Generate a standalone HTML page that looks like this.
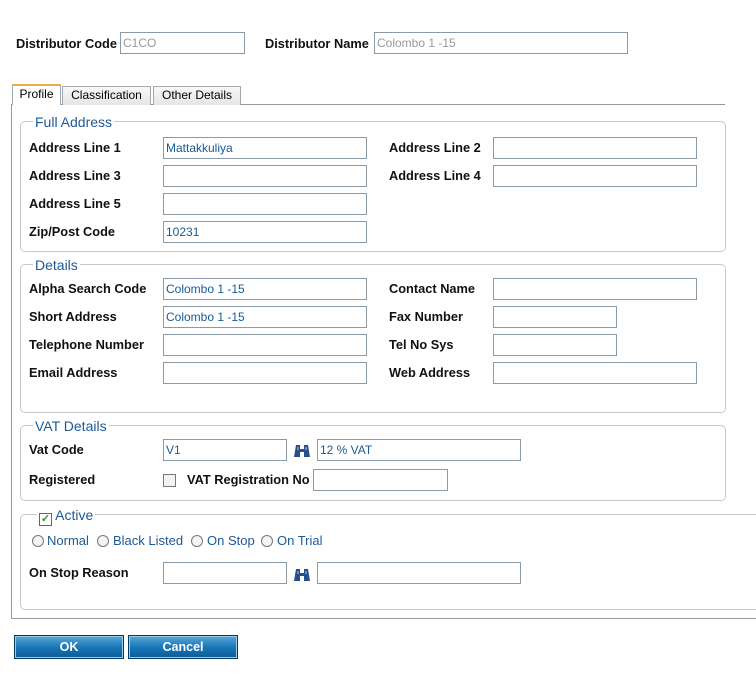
<!DOCTYPE html>
<html><head><meta charset="utf-8"><style>
*{box-sizing:border-box;margin:0;padding:0}
body{width:756px;height:678px;background:#fff;position:relative;overflow:hidden;font-family:"Liberation Sans",Tahoma,sans-serif;font-size:12.5px;color:#000}
.a{position:absolute}
.l{position:absolute;font-weight:bold;color:#111;line-height:14px;font-size:12.8px}
.i{position:absolute;height:22px;border:1px solid #8a9aa6;background:#fff;font-size:12px;line-height:20px;padding-left:2px;color:#1a5a96}
.g{color:#999}
.fs{position:absolute;border:1px solid #c8c8c8;border-radius:5px}
.lg{position:absolute;background:#fff;color:#1d5a94;font-size:14px;padding:0 2px;line-height:14px}
.tab{position:absolute;top:86px;height:19px;border:1px solid #a0a8b0;border-bottom:none;background:linear-gradient(#f8f8f8,#e4e6e8);font-size:12px;line-height:17px;text-align:center}
.btn{position:absolute;top:635px;height:24px;border:1px solid #0a3a5a;background:linear-gradient(#58a8d8,#1a78b8 50%,#0a5a96);color:#fff;font-weight:bold;text-align:center;line-height:22px;box-shadow:inset 0 0 0 1px #9ccbe8}
.r{position:absolute;top:535px;width:12px;height:12px;border:1px solid #777;border-radius:50%;background:#f4f4f4}
.rt{position:absolute;top:534px;color:#1d5a94;font-size:13px;line-height:14px;white-space:nowrap}
</style></head><body>
<div class="l" style="left:16px;top:37px">Distributor Code</div>
<div class="i g" style="left:120px;top:32px;width:125px">C1CO</div>
<div class="l" style="left:265px;top:37px">Distributor Name</div>
<div class="i g" style="left:374px;top:32px;width:254px">Colombo 1 -15</div>

<div class="a" style="left:11px;top:104px;width:745px;height:515px;border:1px solid #999;border-right:none;border-top:none"></div>
<div class="a" style="left:11px;top:104px;width:714px;height:1px;background:#999"></div>
<div class="tab" style="left:12px;width:49px;top:84px;height:21px;background:#fff;border-top:2px solid #e8b040">Profile</div>
<div class="tab" style="left:62px;width:89px">Classification</div>
<div class="tab" style="left:153px;width:88px">Other Details</div>

<div class="fs" style="left:20px;top:121px;width:706px;height:131px"></div>
<div class="lg" style="left:33px;top:115px">Full Address</div>
<div class="l" style="left:29px;top:141px">Address Line 1</div><div class="i" style="left:163px;top:137px;width:204px">Mattakkuliya</div>
<div class="l" style="left:389px;top:141px">Address Line 2</div><div class="i" style="left:493px;top:137px;width:204px"></div>
<div class="l" style="left:29px;top:169px">Address Line 3</div><div class="i" style="left:163px;top:165px;width:204px"></div>
<div class="l" style="left:389px;top:169px">Address Line 4</div><div class="i" style="left:493px;top:165px;width:204px"></div>
<div class="l" style="left:29px;top:197px">Address Line 5</div><div class="i" style="left:163px;top:193px;width:204px"></div>
<div class="l" style="left:29px;top:225px">Zip/Post Code</div><div class="i" style="left:163px;top:221px;width:204px">10231</div>

<div class="fs" style="left:20px;top:264px;width:706px;height:149px"></div>
<div class="lg" style="left:33px;top:258px">Details</div>
<div class="l" style="left:29px;top:282px">Alpha Search Code</div><div class="i" style="left:163px;top:278px;width:204px">Colombo 1 -15</div>
<div class="l" style="left:389px;top:282px">Contact Name</div><div class="i" style="left:493px;top:278px;width:204px"></div>
<div class="l" style="left:29px;top:310px">Short Address</div><div class="i" style="left:163px;top:306px;width:204px">Colombo 1 -15</div>
<div class="l" style="left:389px;top:310px">Fax Number</div><div class="i" style="left:493px;top:306px;width:124px"></div>
<div class="l" style="left:29px;top:338px">Telephone Number</div><div class="i" style="left:163px;top:334px;width:204px"></div>
<div class="l" style="left:389px;top:338px">Tel No Sys</div><div class="i" style="left:493px;top:334px;width:124px"></div>
<div class="l" style="left:29px;top:366px">Email Address</div><div class="i" style="left:163px;top:362px;width:204px"></div>
<div class="l" style="left:389px;top:366px">Web Address</div><div class="i" style="left:493px;top:362px;width:204px"></div>

<div class="fs" style="left:20px;top:425px;width:706px;height:76px"></div>
<div class="lg" style="left:33px;top:419px">VAT Details</div>
<div class="l" style="left:29px;top:443px">Vat Code</div><div class="i" style="left:163px;top:439px;width:124px">V1</div>
<svg class="a" style="left:293px;top:443px" width="18" height="16" viewBox="0 0 18 16"><path d="M3 2h4v4h4V2h4l2 12h-6V9H7v5H1z" fill="#2c4e86"/><path d="M4 4h2v3H4zM12 4h2v3h-2z" fill="#6c8cc0"/></svg>
<div class="i" style="left:317px;top:439px;width:204px">12 % VAT</div>
<div class="l" style="left:29px;top:473px">Registered</div>
<div class="a" style="left:163px;top:474px;width:13px;height:13px;border:1px solid #777;background:#f2f2f2"></div>
<div class="l" style="left:187px;top:473px">VAT Registration No</div><div class="i" style="left:313px;top:469px;width:135px"></div>

<div class="a" style="left:20px;top:514px;width:736px;height:96px;border:1px solid #c8c8c8;border-right:none;border-radius:5px 0 0 5px"></div>
<div class="lg" style="left:37px;top:508px"><span style="display:inline-block;width:13px;height:13px;border:1px solid #666;vertical-align:-2px;color:#2a9a2a;font-size:11px;line-height:11px;text-align:center;font-weight:bold">✓</span> Active</div>
<div class="r" style="left:32px"></div><div class="rt" style="left:47px">Normal</div>
<div class="r" style="left:97px"></div><div class="rt" style="left:113px">Black Listed</div>
<div class="r" style="left:191px"></div><div class="rt" style="left:207px">On Stop</div>
<div class="r" style="left:261px"></div><div class="rt" style="left:277px">On Trial</div>
<div class="l" style="left:29px;top:566px">On Stop Reason</div><div class="i" style="left:163px;top:562px;width:124px"></div>
<svg class="a" style="left:293px;top:567px" width="18" height="16" viewBox="0 0 18 16"><path d="M3 2h4v4h4V2h4l2 12h-6V9H7v5H1z" fill="#2c4e86"/><path d="M4 4h2v3H4zM12 4h2v3h-2z" fill="#6c8cc0"/></svg>
<div class="i" style="left:317px;top:562px;width:204px"></div>

<div class="btn" style="left:14px;width:110px">OK</div>
<div class="btn" style="left:128px;width:110px">Cancel</div>
</body></html>
